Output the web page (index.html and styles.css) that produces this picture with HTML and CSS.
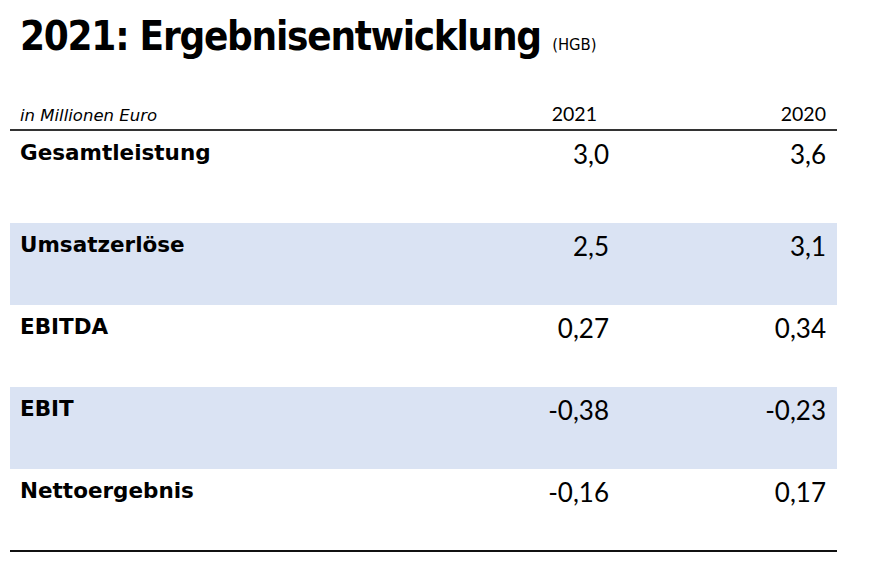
FILE: index.html
```html
<!DOCTYPE html>
<html lang="de">
<head>
<meta charset="utf-8">
<title>2021: Ergebnisentwicklung</title>
<link rel="stylesheet" href="styles.css">
</head>
<body>
<div class="page">
  <h1 class="title">2021: Ergebnisentwicklung <span class="unit">(HGB)</span></h1>
  <div class="table">
    <div class="head">
      <span class="note">in Millionen Euro</span>
      <span class="year y1">2021</span>
      <span class="year y2">2020</span>
    </div>
    <div class="row first">
      <span class="label">Gesamtleistung</span>
      <span class="num">3,0</span>
      <span class="num">3,6</span>
    </div>
    <div class="row shaded">
      <span class="label">Umsatzerlöse</span>
      <span class="num">2,5</span>
      <span class="num">3,1</span>
    </div>
    <div class="row">
      <span class="label">EBITDA</span>
      <span class="num">0,27</span>
      <span class="num">0,34</span>
    </div>
    <div class="row shaded">
      <span class="label">EBIT</span>
      <span class="num">-0,38</span>
      <span class="num">-0,23</span>
    </div>
    <div class="row last">
      <span class="label">Nettoergebnis</span>
      <span class="num">-0,16</span>
      <span class="num">0,17</span>
    </div>
  </div>
</div>
</body>
</html>
```

FILE: styles.css
```css
html, body {
  margin: 0;
  padding: 0;
  background: #ffffff;
  color: #000000;
}

.page {
  width: 883px;
  height: 580px;
  padding: 0 0 0 10px;
  box-sizing: border-box;
}

.title {
  margin: 0;
  padding: 16px 0 0 10px;
  height: 60px;
  box-sizing: border-box;
  font-family: "DejaVu Sans Condensed", "DejaVu Sans", sans-serif;
  font-weight: bold;
  font-size: 40px;
  line-height: 40px;
  letter-spacing: -1.25px;
}

.unit {
  font-family: "DejaVu Sans Condensed", "DejaVu Sans", sans-serif;
  font-weight: normal;
  font-size: 16.5px;
  letter-spacing: 0;
  margin-left: 0;
}

.table {
  width: 827px;
  margin-top: 38px;
}

.head,
.row {
  display: grid;
  grid-template-columns: 1fr 150px 217px;
  padding: 0 11px 0 10px;
}

.head {
  height: 33px;
  border-bottom: 2px solid #333;
  align-items: center;
  box-sizing: border-box;
}

.note {
  font-family: "DejaVu Sans", sans-serif;
  font-style: italic;
  font-size: 16.5px;
  padding-top: 4px;
}

.year {
  font-family: Lato, "Open Sans", sans-serif;
  font-size: 19.5px;
  text-align: right;
}

.y1 {
  padding-right: 12px;
}

.row {
  height: 82px;
  box-sizing: border-box;
  padding-top: 8px;
  align-items: start;
}

.row.first {
  height: 92px;
}

.row.shaded {
  background: #dae3f3;
}

.row.last {
  height: 83px;
  border-bottom: 2px solid #111;
}

.label {
  font-family: "DejaVu Sans", sans-serif;
  font-weight: bold;
  font-size: 21.5px;
  line-height: 27px;
}

.num {
  font-family: Lato, "Open Sans", sans-serif;
  font-size: 26px;
  line-height: 30px;
  text-align: right;
}
```
